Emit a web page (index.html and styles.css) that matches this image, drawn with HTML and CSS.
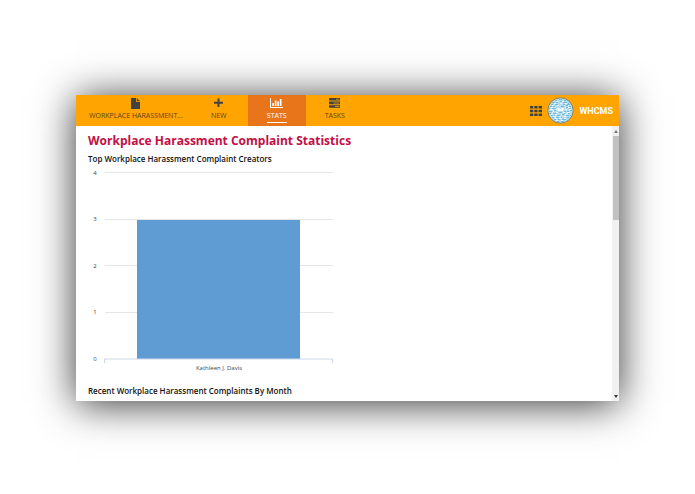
FILE: index.html
```
<!DOCTYPE html>
<html lang="en">
<head>
  <meta charset="UTF-8" />
  <meta name="viewport" content="width=device-width, initial-scale=1.0"/>
  <title>Workplace Harassment Complaint Statistics</title>
  <link rel="stylesheet" href="styles.css">
</head>
<body>

  <div class="window">
    <!-- Top bar -->
    <header class="topbar">
      <nav class="tabs">
        <a href="#" class="tab tab-home">
          <svg width="9" height="11" viewBox="0 0 9 11"><path d="M0 .5Q0 0 .5 0H5v4h4v6.5q0 .5-.5.5h-8Q0 11 0 10.500zM5.800 0L9 3.200H5.800z"/></svg>
          <span>WORKPLACE HARASSMENT...</span>
        </a>
        <a href="#" class="tab">
          <svg width="9" height="11" viewBox="0 0 9 11"><path d="M3.500 .5h2v3.200H9v2H5.500V9h-2V5.700H0v-2h3.500z"/></svg>
          <span>NEW</span>
        </a>
        <a href="#" class="tab active">
          <svg width="13" height="11" viewBox="0 0 13 11"><path d="M0 0h1v9h12v1H0zM2.300 5H4v3H2.300zM4.800 2.500h1.700V8H4.800zM7.300 3.500H9V8H7.300zM9.800 1h1.700v7H9.800z"/></svg>
          <span>STATS</span>
        </a>
        <a href="#" class="tab">
          <svg width="11" height="11" viewBox="0 0 11 11"><path d="M0 0h11v2.600H0zM0 3.600h11v2.600H0zM0 7.200h11v2.600H0z"/><path class="task-fill" d="M7 .8h3.300v1H7zM4.500 4.400h5.800v1H4.500zM6 8h4.300v1H6z"/></svg>
          <span>TASKS</span>
        </a>
      </nav>
      <div class="brand">
        <button class="apps" aria-label="Apps">
          <svg width="12" height="10" viewBox="0 0 12 10"><path d="M0 0h3.300v2.500H0zM4.300 0h3.300v2.500H4.300zM8.600 0H12v2.500H8.600zM0 3.700h3.300v2.500H0zM4.300 3.700h3.300v2.500H4.300zM8.600 3.700H12v2.500H8.600zM0 7.400h3.300V10H0zM4.300 7.400h3.300V10H4.300zM8.600 7.400H12V10H8.600z"/></svg>
        </button>
        <svg class="avatar" width="27" height="27" viewBox="0 0 27 27">
          <circle cx="13.500" cy="13.500" r="12.700" fill="#b5dcef" stroke="#8d8058" stroke-width="1"/>
          <g fill="none" stroke="#6dbbe0" stroke-width="1">
            <path d="M8 3.500h2m2-1h3m2 1h2M5 5.500h3m1 0h2m2-1h2m1 1h4m1 1h1M4 7.500h2m2 0h3m2-1h1m2 1h2m2 0h3M3 9.500h2m1 0h2m3-1h1m2 1h3m2-1h2m1 1h2M2 11.500h1m2 0h4m6 0h1m3-1h2m1 1h2"/>
            <path d="M2 14.500h3m2-1h2m8 1h2m1 0h2m1-1h2M2 16.500h2m2 0h3m3-1h3m2 1h1m2 0h3M4 18.500h2m1 0h1m2 0h3m2-1h2m2 1h3m1 0h1M5 20.500h2m1 0h4m2 0h1m2-1h2m1 1h2M7 22.500h2m2 0h2m2 0h4M10 24.500h2m2 0h3"/>
          </g>
          <path fill="none" stroke="#eaf6fc" stroke-width="1" d="M9 4.500h2m4 0h2M7 6.500h2m4 0h2m3 0h2M5 8.500h2m3 0h2m5 0h1m3 0h1M4 10.500h2m2 0h1m9 0h1m2 0h2M3 12.500h3m2 0h2m8 0h2m2 0h2M5 15.500h1m3 0h2m5 0h2m3 0h2M4 17.500h2m2 0h2m4 0h1m3 0h2M6 19.500h2m4 0h2m3 0h2M8 21.500h2m2 0h3m2 0h2M9 23.500h2m3 0h2M6.500 13v2m14 0v2m-12 2v2"/>
          <path d="M10 11h2l1.500 1 1.500-1h2l-1 3h-5z" fill="#f4fbfe"/>
        </svg>
        <span class="logo">WHCMS</span>
      </div>
    </header>

    <div class="body">
      <!-- Statistics -->
      <main class="content">
        <h1>Workplace Harassment Complaint Statistics</h1>
        <h2>Top Workplace Harassment Complaint Creators</h2>
        <svg class="chart" width="246" height="212" viewBox="0 0 246 212" role="img" aria-label="Complaints by creator">
          <g class="grid">
            <path d="M17 6.500h228M17 53.500h228M17 99.500h228M17 146.500h228"/>
          </g>
          <rect class="bar" x="49" y="54" width="163" height="139"/>
          <path class="axis" d="M16.500 197v-4h228v4"/>
          <g class="labels">
            <text x="7" y="9">4</text>
            <text x="7" y="55">3</text>
            <text x="7" y="102">2</text>
            <text x="7" y="148">1</text>
            <text x="7" y="195">0</text>
            <text x="131" y="204">Kathleen J. Davis</text>
          </g>
        </svg>
        <h2>Recent Workplace Harassment Complaints By Month</h2>
      </main>

      <!-- Scrollbar -->
      <div class="scrollbar">
        <button class="arrow" aria-label="Scroll up"><svg width="4" height="3" viewBox="0 0 4 3"><path d="M0 3L2 0l2 3z" fill="#777"/></svg></button>
        <div class="track"><div class="thumb"></div></div>
        <button class="arrow" aria-label="Scroll down"><svg width="4" height="3" viewBox="0 0 4 3"><path d="M0 0h4L2 3z" fill="#333"/></svg></button>
      </div>
    </div>
  </div>

</body>
</html>
```
FILE: styles.css
```
* {
  box-sizing: border-box;
}

body {
  font-family: "Open Sans", "Noto Sans", sans-serif;
  background-color: #fff;
  margin: 0;
  padding: 95px 76px 93px;
  height: 100vh;
  display: flex;
}

button {
  border: none;
  background: none;
  padding: 0;
  cursor: pointer;
}

svg {
  display: block;
}

.window {
  flex: 1;
  display: flex;
  flex-direction: column;
  background-color: #fff;
  box-shadow: 0 3px 38px rgba(0,0,0,0.8);
}

.topbar {
  display: flex;
  justify-content: space-between;
  background-color: #ffa400;
}

.tabs {
  display: flex;
}

.tab {
  min-width: 58px;
  padding: 3px 0 3px;
  display: flex;
  flex-direction: column;
  align-items: center;
  gap: 1px;
  font-size: 7px;
  line-height: 12px;
  color: #5c4718;
  text-decoration: none;
}

.tab svg {
  fill: #41423f;
}

.tab .task-fill {
  fill: #c08a26;
}

.tab-home {
  padding-left: 13px;
  padding-right: 7px;
}

.tab.active {
  background-color: #e8751a;
  color: #fff;
}

.tab.active svg {
  fill: #fff;
}

.tab.active span {
  border-bottom: 1px solid #fff;
}

.brand {
  display: flex;
  align-items: center;
  gap: 5px;
  padding-right: 6px;
}

.apps svg {
  fill: #41423f;
}

.logo {
  font-family: Roboto, sans-serif;
  font-size: 9px;
  font-weight: bold;
  color: #fff;
}

.body {
  flex: 1;
  min-height: 0;
  display: flex;
}

.content {
  flex: 1;
  padding: 7px 12px 0;
  overflow: hidden;
}

h1 {
  margin: 0 0 3px;
  font-size: 12px;
  line-height: 16px;
  color: #c20e45;
}

h2 {
  margin: 0;
  font-size: 8px;
  font-weight: 600;
  line-height: 14px;
  color: #111;
}

.chart {
  margin: 0 0 6px;
}

.grid path {
  stroke: #e6e6e6;
}

.bar {
  fill: #609cd4;
}

.axis {
  fill: none;
  stroke: #ccd6eb;
}

.labels text {
  font-size: 6px;
  fill: #444;
  text-anchor: middle;
}

.scrollbar {
  width: 7px;
  display: flex;
  flex-direction: column;
  background-color: #f1f1f1;
}

.arrow {
  height: 10px;
  display: flex;
  align-items: center;
  justify-content: center;
}

.track {
  flex: 1;
}

.thumb {
  height: 33%;
  margin-left: 1px;
  background-color: #c1c1c1;
}
```
